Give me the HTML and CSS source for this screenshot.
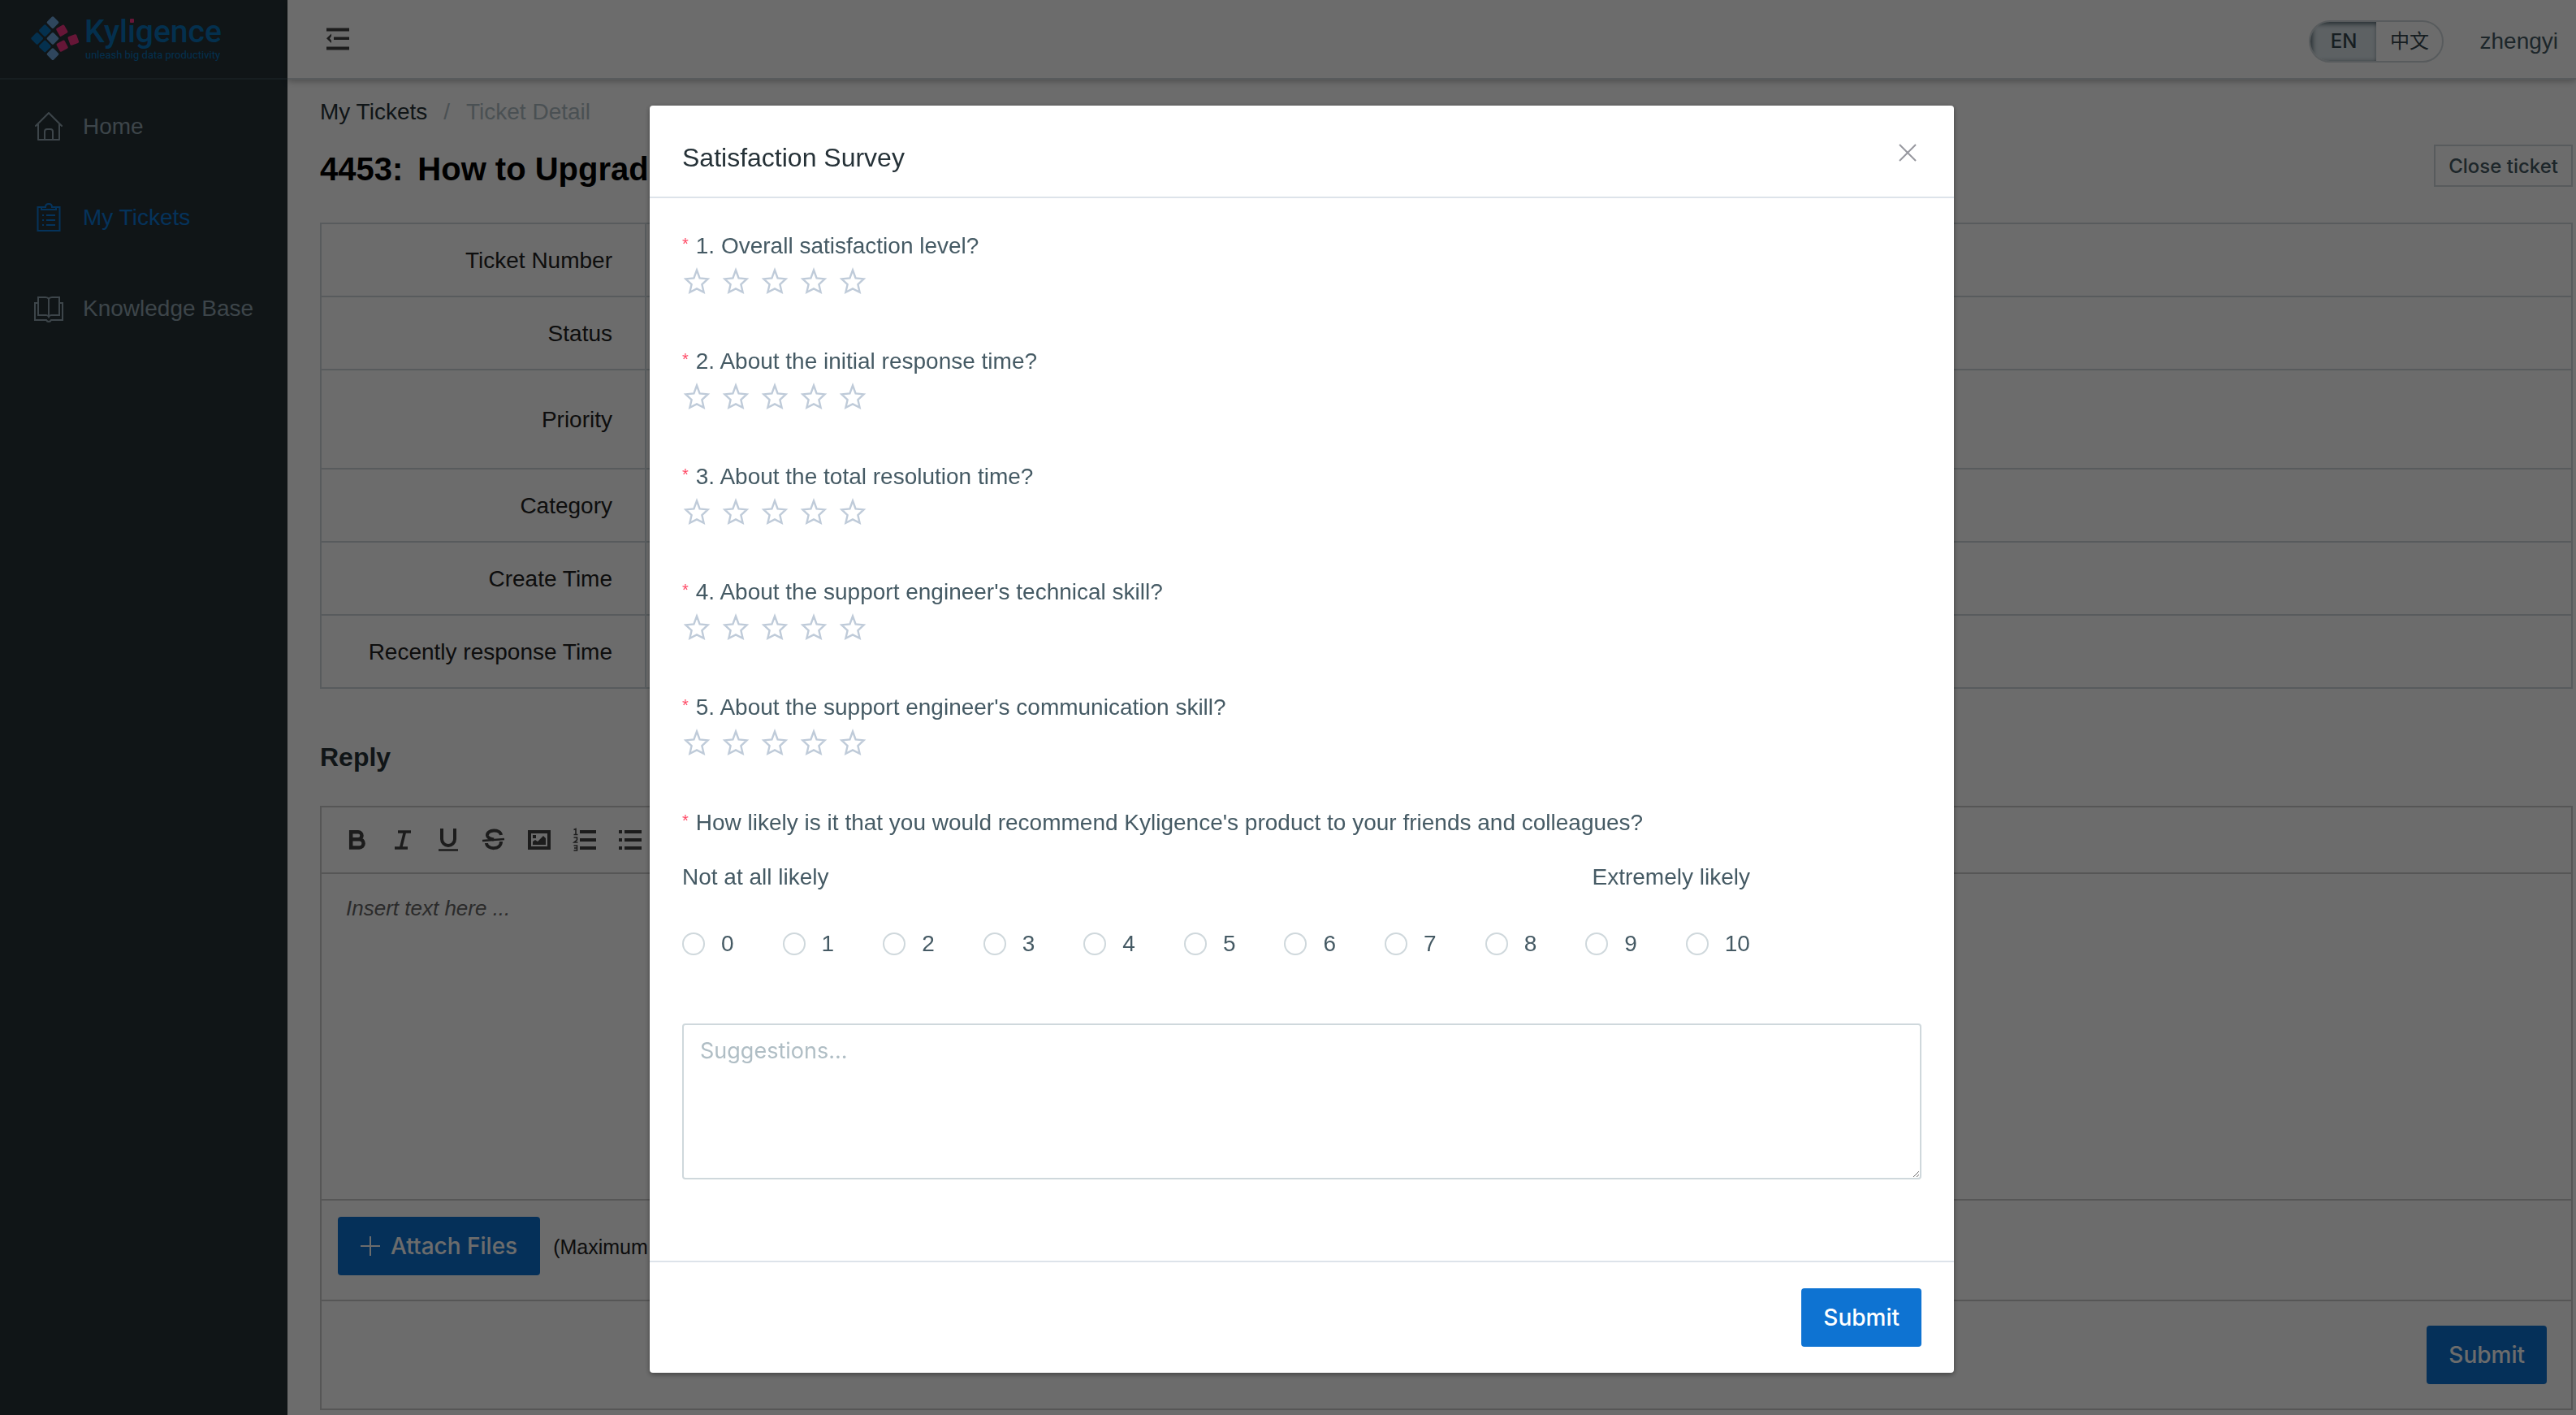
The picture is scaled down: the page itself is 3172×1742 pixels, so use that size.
FILE: index.html
```html
<!DOCTYPE html>
<html lang="en">
<head>
<meta charset="utf-8">
<meta name="viewport" content="width=device-width, initial-scale=1">
<title>Ticket Detail - Kyligence</title>
<link rel="stylesheet" href="styles.css">
</head>
<body>
<svg class="sprite" aria-hidden="true">
  <symbol id="star" viewBox="0 0 36 36">
    <path d="M18 4.5 L21.6 14.4 L31.6 15.4 L24.4 22.2 L26.6 31.8 L18 27.4 L9.4 31.8 L11.6 22.2 L4.4 15.4 L14.4 14.4 Z" fill="none" stroke="currentColor" stroke-width="2.4"/>
  </symbol>
</svg>

<div class="app">
  <aside class="sidebar">
    <a class="brand" href="#" aria-label="Kyligence home">
      <svg class="logo" viewBox="0 0 240 70" role="img" aria-label="Kyligence, unleash big data productivity">
        <g transform="translate(0,9) scale(.3333) translate(-20,-28)">
          <g fill="#6fa6dc">
            <rect x="-17" y="-17" width="34" height="34" rx="5" transform="translate(104,54) rotate(45)"/>
            <rect x="-17" y="-17" width="34" height="34" rx="5" transform="translate(104,113) rotate(45)"/>
            <rect x="-17" y="-17" width="34" height="34" rx="5" transform="translate(104,171) rotate(45)"/>
          </g>
          <g fill="#0a72b8">
            <rect x="-17" y="-17" width="34" height="34" rx="5" transform="translate(75,84) rotate(45)"/>
            <rect x="-17" y="-17" width="34" height="34" rx="5" transform="translate(46,113) rotate(45)"/>
            <rect x="-17" y="-17" width="34" height="34" rx="5" transform="translate(75,142) rotate(45)"/>
          </g>
          <g fill="#f03583">
            <rect x="-17" y="-17" width="34" height="34" rx="5" transform="translate(138,84) rotate(60)"/>
            <rect x="-17" y="-17" width="34" height="34" rx="5" transform="translate(180,118) rotate(70)"/>
            <rect x="-17" y="-17" width="34" height="34" rx="5" transform="translate(139,141) rotate(62)"/>
          </g>
        </g>
        <text class="logo-name" x="67" y="42">Kyligence</text>
        <text class="logo-tag" x="68" y="62">unleash big data productivity</text>
        <rect x="121" y="11" width="9" height="8" fill="#263238"/>
        <rect x="123" y="13" width="5" height="5" rx="1" fill="#f03583"/>
      </svg>
    </a>
    <nav class="menu">
      <a class="menu-item" href="#">
        <svg class="menu-icon" viewBox="0 0 36 36" fill="none" stroke="currentColor" stroke-width="2" stroke-linejoin="round" stroke-linecap="round"><path d="M2 17 L18 1 L34 17 M5 15 V34 H31 V15 M13 34 V24 Q13 21 16 21 H20 Q23 21 23 24 V34"/></svg>
        <span>Home</span>
      </a>
      <a class="menu-item is-active" href="#">
        <svg class="menu-icon" viewBox="0 0 36 36" fill="none" stroke="currentColor" stroke-width="2"><path d="M10 5 H4.500 V34 H31.500 V5 H26 M9 8 V5 H14 Q14 1 18 1 Q22 1 22 5 H27 V8 Z M10 15 H12 M15 15 H26 M10 21 H12 M15 21 H26 M10 27 H12 M15 27 H26"/></svg>
        <span>My Tickets</span>
      </a>
      <a class="menu-item" href="#">
        <svg class="menu-icon" viewBox="0 0 36 36" fill="none" stroke="currentColor" stroke-width="2"><path d="M18 6 Q17 4 14 4 H5 V26 H15 Q17 26 18 28 Q19 26 21 26 H31 V4 H22 Q19 4 18 6 V28 M5 11 H1 V32 H15 Q16 34 18 34 Q20 34 21 32 H35 V11 H31"/></svg>
        <span>Knowledge Base</span>
      </a>
    </nav>
  </aside>

  <div class="page">
    <header class="topbar">
      <button class="collapse" type="button" aria-label="Collapse menu">
        <svg viewBox="0 0 28 28" fill="currentColor"><path d="M0 0.500h28v4H0zM9 11.500h19v3.500H9zM0 23.500h28v4H0zM6 7.500v3L4 13.300 6 16v3L0 13.300z"/></svg>
      </button>
      <div class="topbar-right">
        <div class="lang" role="group" aria-label="Language">
          <button class="lang-btn is-on" type="button">EN</button>
          <button class="lang-btn" type="button">中文</button>
        </div>
        <a class="user" href="#">zhengyi</a>
      </div>
    </header>

    <main class="content">
      <nav class="crumbs" aria-label="Breadcrumb">
        <a class="crumb" href="#">My Tickets</a>
        <span class="crumb-rest">/</span>
        <span class="crumb-rest">Ticket Detail</span>
      </nav>
      <div class="title-row">
        <h1 class="title"><span>4453:</span><span>How to Upgrade</span></h1>
        <button class="btn-plain" type="button">Close ticket</button>
      </div>
      <table class="info">
        <tr><th scope="row">Ticket Number</th><td></td></tr>
        <tr><th scope="row">Status</th><td></td></tr>
        <tr class="tall"><th scope="row">Priority</th><td></td></tr>
        <tr><th scope="row">Category</th><td></td></tr>
        <tr><th scope="row">Create Time</th><td></td></tr>
        <tr><th scope="row">Recently response Time</th><td></td></tr>
      </table>

      <h2 class="section-title">Reply</h2>
      <section class="editor">
        <div class="toolbar">
          <button class="tool" type="button" aria-label="Bold"><svg viewBox="0 0 36 36" fill="none" stroke="currentColor" stroke-width="4.500"><path d="M10.200 8.200H19a4.500 4.500 0 0 1 0 9H10.200zM10.200 17.200H20.500a4.800 4.800 0 0 1 0 10.200H10.200z"/></svg></button>
          <button class="tool" type="button" aria-label="Italic"><svg viewBox="0 0 36 36" fill="none" stroke="currentColor" stroke-width="3.500"><path d="M12 8H28M8 28H24M20.500 8 15.500 28"/></svg></button>
          <button class="tool" type="button" aria-label="Underline"><svg viewBox="0 0 36 36" fill="none" stroke="currentColor" stroke-width="4"><path d="M10 4V17a8 8 0 0 0 16 0V4"/><path d="M6 30.500H30" stroke-width="2.500"/></svg></button>
          <button class="tool" type="button" aria-label="Strikethrough"><svg viewBox="0 0 36 36" fill="none" stroke="currentColor" stroke-width="4"><path d="M27 12C26 4 9.500 5 10 12.500 10.500 16 14 16.500 18 17.500M27 20C27 31 9.500 30 9 22"/><path d="M4 19 31 17" stroke-width="2.500"/></svg></button>
          <button class="tool" type="button" aria-label="Image"><svg viewBox="0 0 36 36"><path d="M6 8H30V28H6z" fill="none" stroke="currentColor" stroke-width="4"/><path d="M10 12h4v4h-4zM10 24v-4l3-2 3 2 7-7 3 3v8z" fill="currentColor"/></svg></button>
          <button class="tool" type="button" aria-label="Numbered list"><svg viewBox="0 0 36 36" fill="none" stroke="currentColor"><path d="M12 8H32M12 18H32M12 28H32" stroke-width="4"/><path d="M4.500 5.500 7 4.500V11M4.500 11.500H9.500M4.500 15H8.500V18L5 21H9.500M4.500 25H8.500V31H4.500M5 28H8.500" stroke-width="1.600"/></svg></button>
          <button class="tool" type="button" aria-label="Bullet list"><svg viewBox="0 0 36 36" fill="none" stroke="currentColor" stroke-width="4"><path d="M4 8H8M11 8H32M4 18H8M11 18H32M4 28H8M11 28H32"/></svg></button>
        </div>
        <textarea class="editor-text" aria-label="Reply text" placeholder="Insert text here ..."></textarea>
        <div class="attach-row">
          <button class="btn-primary btn-attach" type="button">
            <svg class="plus" viewBox="0 0 24 24" fill="none" stroke="currentColor" stroke-width="2"><path d="M12 0V24M0 12H24"/></svg>
            <span>Attach Files</span>
          </button>
          <span class="attach-note">(Maximum</span>
        </div>
        <div class="submit-row"><button class="btn-primary" type="button">Submit</button></div>
      </section>
    </main>
  </div>
</div>

<div class="backdrop">
  <form class="modal" role="dialog" aria-modal="true" aria-labelledby="survey-title">
    <header class="modal-head">
      <h2 class="modal-title" id="survey-title">Satisfaction Survey</h2>
      <button class="modal-close" type="button" aria-label="Close">
        <svg viewBox="0 0 22 22" fill="none" stroke="currentColor" stroke-width="2"><path d="M1 1 21 21M21 1 1 21"/></svg>
      </button>
    </header>

    <div class="modal-body">
      <fieldset class="question">
        <legend class="q-label">1. Overall satisfaction level?</legend>
        <div class="rate">
          <label class="star"><input type="radio" name="q1" value="1" aria-label="1 star"><svg><use href="#star"/></svg></label>
          <label class="star"><input type="radio" name="q1" value="2" aria-label="2 stars"><svg><use href="#star"/></svg></label>
          <label class="star"><input type="radio" name="q1" value="3" aria-label="3 stars"><svg><use href="#star"/></svg></label>
          <label class="star"><input type="radio" name="q1" value="4" aria-label="4 stars"><svg><use href="#star"/></svg></label>
          <label class="star"><input type="radio" name="q1" value="5" aria-label="5 stars"><svg><use href="#star"/></svg></label>
        </div>
      </fieldset>
      <fieldset class="question">
        <legend class="q-label">2. About the initial response time?</legend>
        <div class="rate">
          <label class="star"><input type="radio" name="q2" value="1" aria-label="1 star"><svg><use href="#star"/></svg></label>
          <label class="star"><input type="radio" name="q2" value="2" aria-label="2 stars"><svg><use href="#star"/></svg></label>
          <label class="star"><input type="radio" name="q2" value="3" aria-label="3 stars"><svg><use href="#star"/></svg></label>
          <label class="star"><input type="radio" name="q2" value="4" aria-label="4 stars"><svg><use href="#star"/></svg></label>
          <label class="star"><input type="radio" name="q2" value="5" aria-label="5 stars"><svg><use href="#star"/></svg></label>
        </div>
      </fieldset>
      <fieldset class="question">
        <legend class="q-label">3. About the total resolution time?</legend>
        <div class="rate">
          <label class="star"><input type="radio" name="q3" value="1" aria-label="1 star"><svg><use href="#star"/></svg></label>
          <label class="star"><input type="radio" name="q3" value="2" aria-label="2 stars"><svg><use href="#star"/></svg></label>
          <label class="star"><input type="radio" name="q3" value="3" aria-label="3 stars"><svg><use href="#star"/></svg></label>
          <label class="star"><input type="radio" name="q3" value="4" aria-label="4 stars"><svg><use href="#star"/></svg></label>
          <label class="star"><input type="radio" name="q3" value="5" aria-label="5 stars"><svg><use href="#star"/></svg></label>
        </div>
      </fieldset>
      <fieldset class="question">
        <legend class="q-label">4. About the support engineer's technical skill?</legend>
        <div class="rate">
          <label class="star"><input type="radio" name="q4" value="1" aria-label="1 star"><svg><use href="#star"/></svg></label>
          <label class="star"><input type="radio" name="q4" value="2" aria-label="2 stars"><svg><use href="#star"/></svg></label>
          <label class="star"><input type="radio" name="q4" value="3" aria-label="3 stars"><svg><use href="#star"/></svg></label>
          <label class="star"><input type="radio" name="q4" value="4" aria-label="4 stars"><svg><use href="#star"/></svg></label>
          <label class="star"><input type="radio" name="q4" value="5" aria-label="5 stars"><svg><use href="#star"/></svg></label>
        </div>
      </fieldset>
      <fieldset class="question">
        <legend class="q-label">5. About the support engineer's communication skill?</legend>
        <div class="rate">
          <label class="star"><input type="radio" name="q5" value="1" aria-label="1 star"><svg><use href="#star"/></svg></label>
          <label class="star"><input type="radio" name="q5" value="2" aria-label="2 stars"><svg><use href="#star"/></svg></label>
          <label class="star"><input type="radio" name="q5" value="3" aria-label="3 stars"><svg><use href="#star"/></svg></label>
          <label class="star"><input type="radio" name="q5" value="4" aria-label="4 stars"><svg><use href="#star"/></svg></label>
          <label class="star"><input type="radio" name="q5" value="5" aria-label="5 stars"><svg><use href="#star"/></svg></label>
        </div>
      </fieldset>
      <fieldset class="question recommend">
        <legend class="q-label">How likely is it that you would recommend Kyligence's product to your friends and colleagues?</legend>
        <div class="scale">
          <div class="scale-ends"><span>Not at all likely</span><span>Extremely likely</span></div>
          <div class="scale-options">
            <label class="option"><input type="radio" name="nps" value="0">0</label>
            <label class="option"><input type="radio" name="nps" value="1">1</label>
            <label class="option"><input type="radio" name="nps" value="2">2</label>
            <label class="option"><input type="radio" name="nps" value="3">3</label>
            <label class="option"><input type="radio" name="nps" value="4">4</label>
            <label class="option"><input type="radio" name="nps" value="5">5</label>
            <label class="option"><input type="radio" name="nps" value="6">6</label>
            <label class="option"><input type="radio" name="nps" value="7">7</label>
            <label class="option"><input type="radio" name="nps" value="8">8</label>
            <label class="option"><input type="radio" name="nps" value="9">9</label>
            <label class="option"><input type="radio" name="nps" value="10">10</label>
          </div>
        </div>
      </fieldset>
      <textarea class="suggestions" aria-label="Suggestions" placeholder="Suggestions..."></textarea>
    </div>

    <footer class="modal-foot"><button class="btn-primary" type="submit">Submit</button></footer>
  </form>
</div>
</body>
</html>
```
FILE: styles.css
```css
* { box-sizing: border-box; }

body {
  margin: 0;
  background: #fff;
  color: #263238;
  font: 28px/40px "Liberation Sans", "Noto Sans CJK SC", sans-serif;
}

button, input, textarea { font: inherit; color: inherit; margin: 0; }
button { border: 0; background: none; padding: 0; cursor: pointer; }
a { color: inherit; text-decoration: none; }
svg { display: block; }
h1, h2 { margin: 0; }
fieldset { border: 0; margin: 0; padding: 0; min-width: 0; }
.sprite { display: none; }

.app { display: flex; min-height: 100vh; }

/* Sidebar */
.sidebar { flex: 0 0 354px; background: #263238; color: #90a4ae; }
.brand {
  display: block;
  height: 98px;
  padding: 10px 0 0 37px;
  border-bottom: 2px solid #37474f;
}
.logo { width: 240px; height: 70px; }
.logo-name { font: 500 39px Roboto, sans-serif; fill: #0a72b8; }
.logo-tag { font: 13px Roboto, sans-serif; fill: #0a72b8; }
.menu { padding-top: 2px; }
.menu-item {
  display: flex;
  align-items: center;
  gap: 24px;
  height: 112px;
  padding-left: 42px;
}
.menu-item.is-active { color: #0d78d8; }
.menu-icon { width: 36px; height: 36px; }

/* Top bar */
.page { flex: 1; min-width: 0; }
.topbar {
  display: flex;
  justify-content: space-between;
  height: 98px;
  padding: 0 22px 0 48px;
  border-bottom: 2px solid #cfd8dc;
  box-shadow: 0 2px 8px rgba(0, 0, 0, .3);
}
.collapse { align-self: center; width: 28px; height: 28px; color: #444; }
.collapse svg { width: 28px; height: 28px; }
.topbar-right { display: flex; align-items: center; gap: 44px; color: #455a64; padding-top: 6px; }
.lang {
  display: flex;
  height: 52px;
  border: 2px solid #cfd8dc;
  border-radius: 26px;
  overflow: hidden;
}
.lang-btn { width: 81px; font: 24px/48px Inter, "Noto Sans CJK SC", sans-serif; color: #37474f; }
.lang-btn.is-on {
  font-weight: 500;
  background: #dbe5ea;
  box-shadow: inset 2px 2px 6px #455a64;
}

/* Ticket detail */
.content { padding: 20px 4px 4px 40px; }
.crumbs { display: flex; gap: 20px; margin-bottom: 20px; }
.crumb-rest { color: #b0bec5; }
.title-row { display: flex; justify-content: space-between; align-items: flex-start; margin-bottom: 36px; }
.title { display: flex; gap: 18px; font-size: 40px; line-height: 60px; color: #000; }
.btn-plain {
  height: 52px;
  padding: 0 16px;
  border: 2px solid #cfd8dc;
  font: 500 24px Inter, sans-serif;
  color: #455a64;
}
.info { width: 100%; border-collapse: collapse; }
.info th, .info td { border: 2px solid #cfd8dc; height: 90px; }
.info .tall th { height: 122px; }
.info th {
  width: 400px;
  padding: 2px 40px 0 0;
  font-weight: 400;
  text-align: right;
  color: #222;
}
.section-title { margin: 60px 0 36px; font-size: 32px; line-height: 48px; }

/* Reply editor */
.editor { border: 2px solid #ccc; }
.toolbar { display: flex; align-items: center; height: 82px; padding-left: 16px; border-bottom: 2px solid #ccc; }
.tool { width: 56px; display: flex; justify-content: center; color: #444; }
.tool svg { width: 36px; height: 36px; }
.editor-text {
  display: block;
  width: 100%;
  height: 400px;
  padding: 22px 30px;
  border: 0;
  background: none;
  resize: none;
  font-size: 26px;
  font-style: italic;
}
.editor-text::placeholder { color: #666; }
.attach-row {
  display: flex;
  gap: 16px;
  padding: 20px 20px 30px;
  border-top: 2px solid #ccc;
  border-bottom: 2px solid #ccc;
}
.attach-note { font-size: 25px; line-height: 74px; height: 72px; color: #222; }
.submit-row { display: flex; justify-content: flex-end; padding: 30px; }
.btn-primary {
  height: 72px;
  padding: 0 27px;
  border-radius: 4px;
  background: #0e73d2;
  color: #fff;
  font: 500 28px Inter, sans-serif;
}
.btn-attach { display: flex; align-items: center; gap: 13px; padding: 0 28px; }
.plus { width: 24px; height: 24px; }

/* Survey dialog */
.backdrop {
  position: fixed;
  inset: 0;
  display: flex;
  justify-content: center;
  align-items: flex-start;
  padding: 130px 0 0 34px;
  overflow: auto;
  background: rgba(0, 0, 0, .575);
}
.modal {
  width: 1606px;
  max-width: 100%;
  background: #fff;
  border-radius: 4px;
  box-shadow: 0 2px 6px rgba(0, 0, 0, .4);
  color: #455a64;
}
.modal-head {
  display: flex;
  justify-content: space-between;
  align-items: flex-start;
  padding: 40px 46px 24px 40px;
  border-bottom: 2px solid #dde3ea;
}
.modal-title { font-size: 32px; line-height: 48px; font-weight: 400; color: #263238; }
.modal-close { padding: 7px 0; color: #97989f; }
.modal-close svg { width: 22px; height: 22px; }
.modal-body { padding: 40px 40px 100px; }
.question { margin-bottom: 56px; }
.q-label { display: flex; gap: 9px; padding: 0; line-height: 38px; }
.q-label::before { content: "*"; font-size: 20px; line-height: 32px; color: #ff4965; }
.rate { display: flex; align-items: center; gap: 12px; height: 48px; }
.star { display: grid; width: 36px; height: 36px; color: #bfcbd9; cursor: pointer; }
.star input, .star svg { grid-area: 1 / 1; width: 36px; height: 36px; }
.star input { appearance: none; }
.recommend { margin-bottom: 78px; }
.scale { width: fit-content; padding-top: 28px; }
.scale-ends { display: flex; justify-content: space-between; margin-bottom: 42px; }
.scale-options { display: flex; gap: 60px; }
.option { display: flex; align-items: center; gap: 20px; }
.option input {
  appearance: none;
  width: 28px;
  height: 28px;
  border: 2px solid #cfd8dc;
  border-radius: 50%;
}
.suggestions {
  display: block;
  width: 100%;
  height: 192px;
  padding: 12px 20px;
  border: 2px solid #cfd8dc;
  border-radius: 4px;
  font-family: Inter, sans-serif;
  font-size: 27px;
  resize: vertical;
}
.suggestions::placeholder { color: #b0bec5; }
.modal-foot {
  display: flex;
  justify-content: flex-end;
  padding: 32px 40px;
  border-top: 2px solid #dde3ea;
}
```
